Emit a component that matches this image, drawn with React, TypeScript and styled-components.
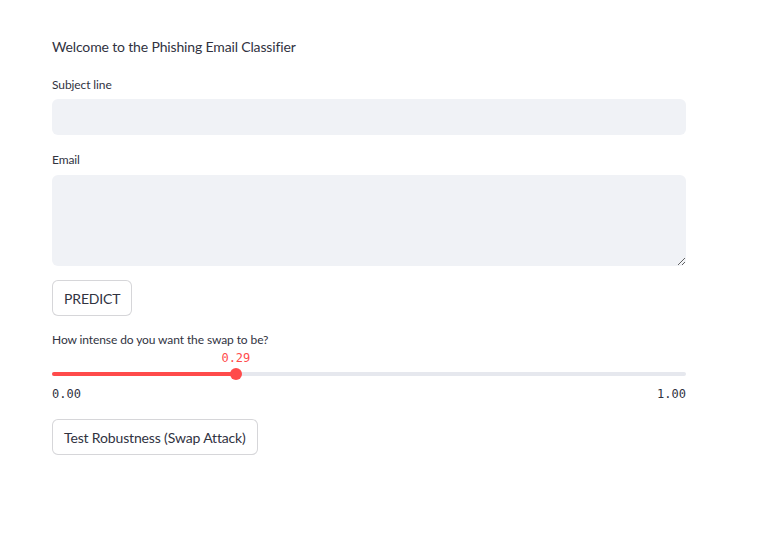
import React, { useState } from "react";
import styled, { createGlobalStyle } from "styled-components";

const Global = createGlobalStyle`
  html, body { margin: 0; padding: 0; background: #ffffff; }
  body { font-family: "Lato", "Noto Sans", sans-serif; color: #31333f; }
  * { box-sizing: border-box; }
`;

const Main = styled.main`
  width: 762px;
  padding: 37px 0 0 52px;
`;

const Column = styled.div`
  width: 634px;
  display: flex;
  flex-direction: column;
`;

const Title = styled.p`
  margin: 0;
  font-size: 14px;
  line-height: 20px;
  letter-spacing: -0.15px;
  color: #31333f;
`;

const Label = styled.label<{ $top: number }>`
  display: block;
  margin-top: ${(p) => p.$top}px;
  font-size: 12px;
  line-height: 16px;
  letter-spacing: -0.1px;
  color: #31333f;
`;

const TextInput = styled.input`
  margin-top: 6px;
  height: 36px;
  width: 100%;
  border: none;
  border-radius: 6px;
  background: #f0f2f6;
  padding: 0 12px;
  font-family: inherit;
  font-size: 14px;
  outline: none;
`;

const TextArea = styled.textarea`
  margin-top: 7px;
  height: 91px;
  width: 100%;
  border: none;
  border-radius: 6px;
  background: #f0f2f6;
  padding: 10px 12px;
  font-family: inherit;
  font-size: 14px;
  outline: none;
  resize: vertical;
  display: block;
`;

const Button = styled.button<{ $top: number }>`
  align-self: flex-start;
  margin-top: ${(p) => p.$top}px;
  height: 36px;
  padding: 0 11px;
  background: #ffffff;
  border: 1px solid rgba(49, 51, 63, 0.2);
  border-radius: 6px;
  font-family: inherit;
  font-size: 14px;
  letter-spacing: -0.15px;
  color: #31333f;
  cursor: pointer;
`;

const Slider = styled.div`
  position: relative;
  margin-top: 4px;
  height: 56px;
`;

const ValueTag = styled.div`
  position: absolute;
  top: 0;
  transform: translateX(-50%);
  font-family: "DejaVu Sans Mono", "Liberation Mono", monospace;
  font-size: 12px;
  line-height: 12px;
  color: #ff4b4b;
`;

const Track = styled.div`
  position: absolute;
  top: 20px;
  left: 0;
  right: 0;
  height: 4px;
  border-radius: 2px;
  background: #e6e8ee;
`;

const Fill = styled.div`
  height: 100%;
  border-radius: 2px;
  background: #ff4b4b;
`;

const Thumb = styled.div`
  position: absolute;
  top: 16px;
  width: 12px;
  height: 12px;
  margin-left: -6px;
  border-radius: 50%;
  background: #ff4b4b;
`;

const Bounds = styled.div`
  position: absolute;
  top: 36px;
  left: 0;
  right: 0;
  display: flex;
  justify-content: space-between;
  font-family: "DejaVu Sans Mono", "Liberation Mono", monospace;
  font-size: 12px;
  line-height: 12px;
  color: #31333f;
`;

export default function App() {
  const [value] = useState(0.29);
  const pct = `${value * 100}%`;
  return (
    <>
      <Global />
      <Main>
        <Column>
          <Title>Welcome to the Phishing Email Classifier</Title>
          <Label $top={20}>Subject line</Label>
          <TextInput type="text" />
          <Label $top={17}>Email</Label>
          <TextArea />
          <Button $top={14}>PREDICT</Button>
          <Label $top={16}>How intense do you want the swap to be?</Label>
          <Slider>
            <ValueTag style={{ left: pct }}>{value.toFixed(2)}</ValueTag>
            <Track>
              <Fill style={{ width: pct }} />
            </Track>
            <Thumb style={{ left: pct }} />
            <Bounds>
              <span>0.00</span>
              <span>1.00</span>
            </Bounds>
          </Slider>
          <Button $top={11}>Test Robustness (Swap Attack)</Button>
        </Column>
      </Main>
    </>
  );
}
